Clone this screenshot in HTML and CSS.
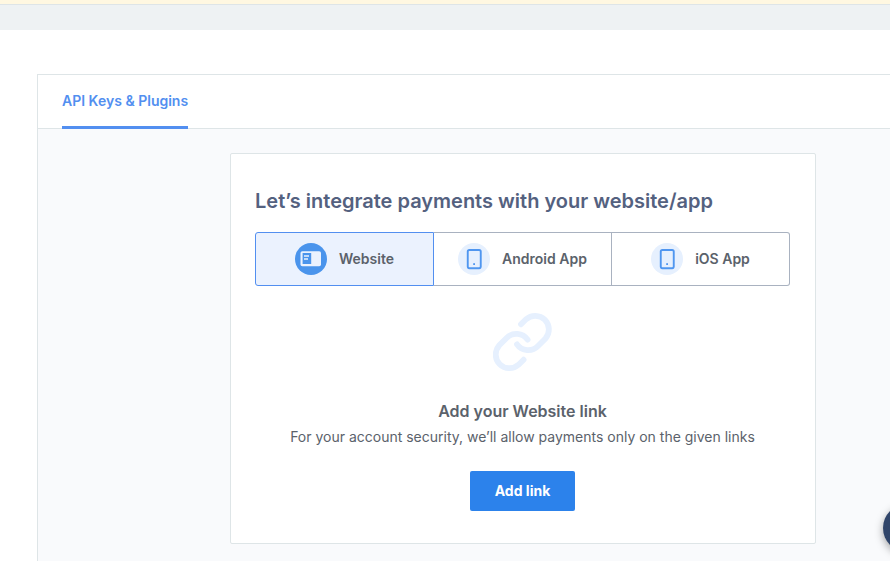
FILE: index.html
```html
<!DOCTYPE html>
<html lang="en">
<head>
<meta charset="utf-8">
<title>API Keys &amp; Plugins</title>
<link rel="stylesheet" href="styles.css">
</head>
<body>
<div class="notice"></div>
<div class="topbar"></div>
<main class="panel">
  <nav class="tabs"><a class="tab" href="#keys">API Keys &amp; Plugins</a></nav>
  <div class="panel-body">
    <section class="card">
      <h1 class="title">Let’s integrate payments with your website/app</h1>
      <div class="platforms">
        <button class="platform selected" type="button">
          <svg class="icon" viewBox="0 0 32 32" aria-hidden="true"><circle cx="16" cy="16" r="16" fill="#4a94ec"/><rect x="5.5" y="8.2" width="20.5" height="15" rx="1.8" fill="#ebf2fe"/><rect x="7.6" y="10" width="8.6" height="11" fill="#4a94ec"/><path d="M9 13h5M9 16h4" stroke="#ebf2fe" stroke-width="1.5"/></svg>
          Website
        </button>
        <button class="platform" type="button">
          <svg class="icon" viewBox="0 0 32 32" aria-hidden="true"><circle cx="16" cy="16" r="16" fill="#e6f0fe"/><rect x="9.75" y="7" width="13" height="18.2" rx="1.6" fill="none" stroke="#4f96f0" stroke-width="1.9"/><rect x="15.2" y="20.2" width="1.8" height="1.8" fill="#4f96f0"/></svg>
          Android App
        </button>
        <button class="platform" type="button">
          <svg class="icon" viewBox="0 0 32 32" aria-hidden="true"><circle cx="16" cy="16" r="16" fill="#e6f0fe"/><rect x="9.75" y="7" width="13" height="18.2" rx="1.6" fill="none" stroke="#4f96f0" stroke-width="1.9"/><rect x="15.2" y="20.2" width="1.8" height="1.8" fill="#4f96f0"/></svg>
          iOS App
        </button>
      </div>
      <div class="empty">
        <svg class="link-icon" viewBox="0 0 60 60" aria-hidden="true"><g fill="none" stroke="#e6f0fe" stroke-width="5.8" stroke-linecap="round"><path d="M28 12.3L33 7.3A13.7 13.7 0 0 1 52.3 26.7L45 34A13.7 13.7 0 0 1 24 32.3"/><path d="M30.6 47.7L25.6 52.7A13.7 13.7 0 0 1 6.3 33.3L13.6 26A13.7 13.7 0 0 1 34.6 27.7"/></g></svg>
        <h2 class="subtitle">Add your Website link</h2>
        <p class="text">For your account security, we’ll allow payments only on the given links</p>
        <button class="primary" type="button">Add link</button>
      </div>
    </section>
  </div>
</main>
<button class="help" type="button" aria-label="Help"></button>
</body>
</html>
```
FILE: styles.css
```css
* { box-sizing: border-box; }
body {
  margin: 0;
  min-height: 100vh;
  display: flex;
  flex-direction: column;
  overflow-x: hidden;
  background: #fff;
  color: #5b626b;
  font: 14px/20px Inter, sans-serif;
}
button { font: inherit; color: inherit; cursor: pointer; }
.notice { height: 5px; background: #fff8e1; border-bottom: 1px solid #dee5e7; }
.topbar { height: 25px; background: #eef2f3; }
.panel {
  flex: 1;
  display: flex;
  flex-direction: column;
  margin: 44px 0 0 37px;
  border: solid #dee5e7;
  border-width: 1px 0 0 1px;
}
.tabs { display: flex; padding: 0 24px; border-bottom: 1px solid #dee5e7; }
.tab {
  margin-bottom: -1px;
  padding: 16px 0 15px;
  border-bottom: 3px solid #528ff0;
  color: #528ff0;
  font-weight: 600;
  line-height: 20px;
  text-decoration: none;
}
.panel-body { flex: 1; padding: 24px 74px 17px 192px; background: #f9fafc; }
.card {
  padding: 32px 25px 32px 24px;
  background: #fff;
  border: 1px solid #dee5e7;
  border-radius: 2px;
}
.title {
  margin: 0 0 16px;
  color: #54617f;
  font-size: 20px;
  font-weight: 600;
  line-height: 30px;
  white-space: nowrap;
}
.platforms { display: flex; }
.platform {
  flex: 1;
  display: flex;
  align-items: center;
  justify-content: center;
  gap: 12px;
  height: 54px;
  padding: 0;
  background: #fff;
  border: 1px solid #a9b2c0;
  border-left-width: 0;
  font-weight: 600;
}
.platform:last-child { border-radius: 0 3px 3px 0; }
.platform.selected {
  background: #ebf2fe;
  border: 1px solid #528ff0;
  border-radius: 3px 0 0 3px;
}
.icon { width: 32px; height: 32px; }
.empty { display: flex; flex-direction: column; align-items: center; padding-top: 26px; text-align: center; }
.link-icon { width: 60px; height: 60px; }
.subtitle { margin: 27px 0 4px; font-size: 16px; font-weight: 600; line-height: 24px; }
.text { margin: 0 0 24px; line-height: 20px; }
.primary {
  height: 40px;
  padding: 0 25px;
  background: #2c82eb;
  border: 0;
  border-radius: 2px;
  color: #fff;
  font-weight: 700;
}
.help {
  position: fixed;
  right: -41px;
  bottom: 9px;
  width: 48px;
  height: 48px;
  background: #30456a;
  border: 0;
  border-radius: 50%;
  box-shadow: 0 3px 8px rgba(0, 0, 0, .35);
}
```
